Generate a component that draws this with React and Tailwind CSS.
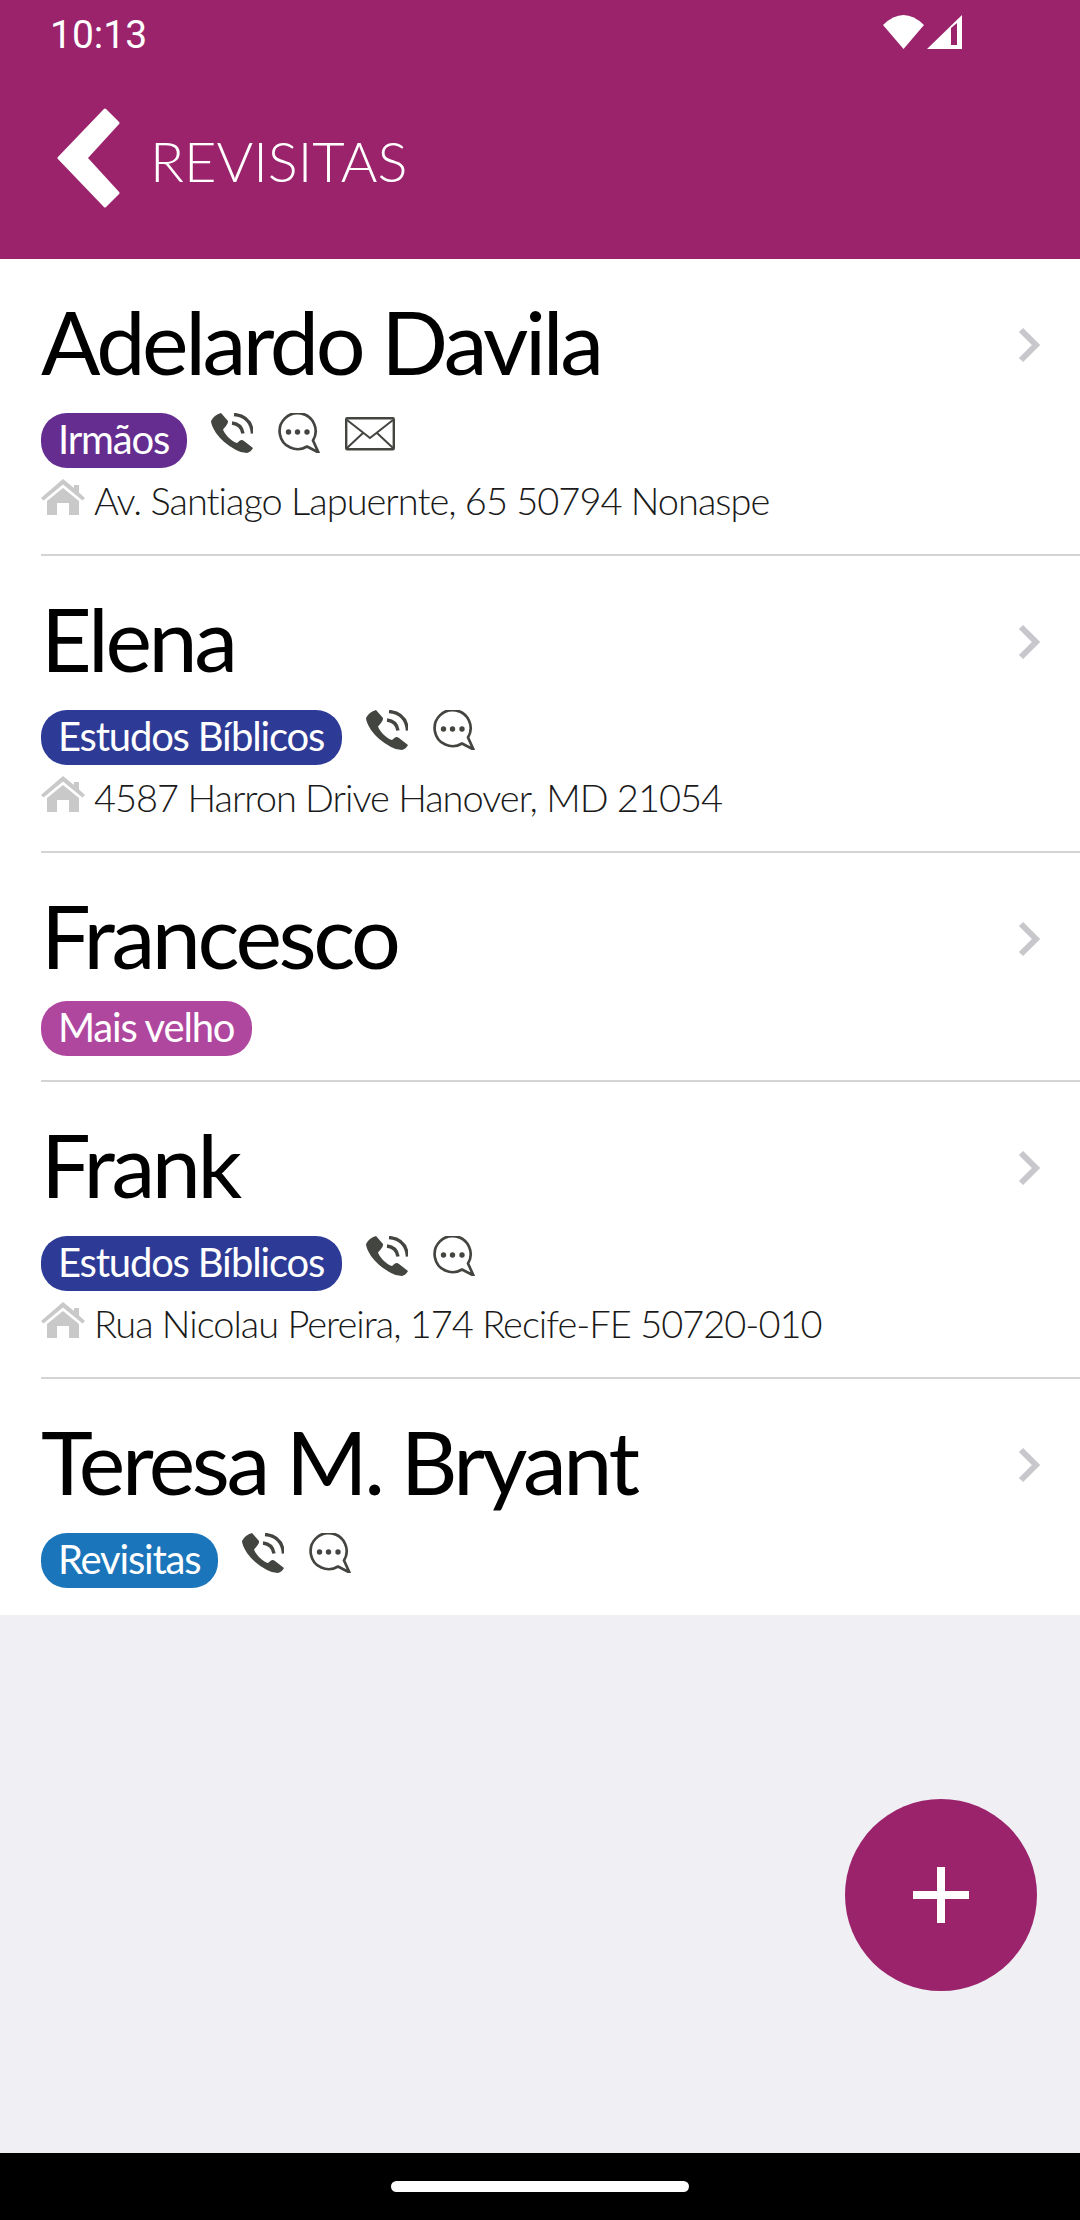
const people = [
    { name: "Adelardo Davila", tag: "Irmãos", color: "bg-[#652d90]", mail: true, address: "Av. Santiago Lapuernte, 65 50794 Nonaspe" },
    { name: "Elena", tag: "Estudos Bíblicos", color: "bg-[#2e3b96]", address: "4587 Harron Drive Hanover, MD 21054" },
    { name: "Francesco", tag: "Mais velho", color: "bg-[#b0479f]", noContact: true },
    { name: "Frank", tag: "Estudos Bíblicos", color: "bg-[#2e3b96]", address: "Rua Nicolau Pereira, 174 Recife-FE 50720-010" },
    { name: "Teresa M. Bryant", tag: "Revisitas", color: "bg-[#1a75bb]", last: true },
];

function PhoneIcon() {
    return (
        <svg width="42" height="40" viewBox="0 0 42 40" fill="none" className="text-[#434541]">
            <path d="M10 0 L17 8 Q17.500 10 15 13 L12 16.500 Q13 20 18 25 Q23 29.500 26 30 L29 27.500 Q31 26.500 33 28 L42 35 Q40 39 36 40 Q30 40 25 37 Q12 30 5 20 Q0 12 0 8 Q3 2 10 0 Z" fill="currentColor" />
            <path d="M21 10 Q30.500 11 32 20.500 M23 1.500 Q40 3 41.500 20.500" stroke="currentColor" strokeWidth="3.400" />
        </svg>
    );
}

function ChatIcon() {
    return (
        <svg width="42" height="40" viewBox="0 0 42 40" fill="none" className="text-[#434541]">
            <path d="M29 33.500 A18 18 0 1 1 35 27.500 L40.500 39.500 Z" stroke="currentColor" strokeWidth="2.700" strokeLinejoin="round" />
            <circle cx="10.500" cy="19" r="2.700" fill="currentColor" />
            <circle cx="19.500" cy="19" r="2.700" fill="currentColor" />
            <circle cx="29" cy="19" r="2.700" fill="currentColor" />
        </svg>
    );
}

function MailIcon() {
    return (
        <svg width="50" height="34" viewBox="0 0 50 34" fill="none" className="mt-[4px] text-[#434541]">
            <rect x="1.200" y="1.200" width="47.600" height="31" rx="1" stroke="currentColor" strokeWidth="2.400" />
            <path d="M2 3 L25 21 L48 3 M2 31 L18 16 M48 31 L32 16" stroke="currentColor" strokeWidth="2" />
        </svg>
    );
}

function HomeIcon() {
    return (
        <svg width="44" height="37" viewBox="0 0 44 37" fill="#c9c9c9" className="shrink-0 mt-[1px]">
            <path d="M22 0 L33 9 V6 H38 V13.500 L44 19 L41.500 21.500 L22 5.500 L2.500 21.500 L0 19 Z" />
            <path d="M22 9 L38 22 V36 H28 V24 H16 V36 H6 V22 Z" />
        </svg>
    );
}

function Row({ person }) {
    return (
        <div className="pl-[41px]">
            <div className={`relative ${person.last ? "h-[236px]" : "border-b-2 border-[#d4d4d6]"} ${person.noContact ? "h-[229px]" : ""} ${!person.last && !person.noContact ? "h-[297px]" : ""}`}>
                <div className="pt-[38px] text-[88px] leading-none tracking-[-3.400px] text-black">
                    {person.name}
                </div>
                <div className={`flex items-start ${person.noContact ? "mt-[22px]" : "mt-[28px]"}`}>
                    <span className={`${person.color} h-[55px] rounded-[26px] pl-[17px] pr-[18px] pb-[4px] flex items-center text-[40px] tracking-[-1.200px] text-white`}>
                        {person.tag}
                    </span>
                    {!person.noContact && (
                        <div className="flex items-start ml-[24px] gap-[25px]">
                            <PhoneIcon />
                            <ChatIcon />
                            {person.mail && <MailIcon />}
                        </div>
                    )}
                </div>
                {person.address && (
                    <div className="flex items-start mt-[10px] gap-[9px]">
                        <HomeIcon />
                        <span className="text-[38px] font-light leading-[44px] tracking-[-1px] text-[#1a1a1a] whitespace-nowrap">{person.address}</span>
                    </div>
                )}
                {/* chevron on the right */}
                <svg width="26" height="36" viewBox="0 0 26 36" fill="none" className="absolute right-[38px] top-[68px]">
                    <path d="M5 3 L20 18 L5 33" stroke="#c8c8cc" strokeWidth="6" />
                </svg>
            </div>
        </div>
    );
}

export default function App() {
    return (
        <div className="relative w-[1080px] h-[2220px] flex flex-col bg-[#efeff4] overflow-hidden font-['Lato',sans-serif]">
            <div className="h-[259px] shrink-0 bg-[#9b236c] text-white">
                <div className="flex items-center justify-between h-[66px] pl-[50px] pr-[118px]">
                    <span className="font-['Roboto',sans-serif] text-[39px] mt-[4px]">10:13</span>
                    <div className="flex items-center gap-[3px] mb-[2px]">
                        <svg width="41" height="34" viewBox="0 0 41 34" fill="white">
                            <path d="M0 10 Q20.500 -10 41 10 L20.500 34 Z" />
                        </svg>
                        <svg width="35" height="34" viewBox="0 0 35 34" fill="white">
                            <path fillRule="evenodd" d="M35 0 V34 H0 Z M30 8 L24 13 V30 H30 Z" />
                        </svg>
                    </div>
                </div>
                <div className="flex items-center mt-[42px] pl-[57px]">
                    <svg width="64" height="100" viewBox="0 0 64 100" fill="white" stroke="white" strokeWidth="3" strokeLinejoin="round">
                        <path d="M48 2 L61 15 L29 50 L61 85 L48 98 L2 50 Z" />
                    </svg>
                    <span className="ml-[29px] mt-[6px] text-[56px] font-light leading-none">REVISITAS</span>
                </div>
            </div>

            <div className="bg-white shrink-0">
                {people.map((p) => (
                    <Row key={p.name} person={p} />
                ))}
            </div>

            <div className="flex-1" />

            <div className="h-[67px] shrink-0 bg-black flex items-center justify-center">
                <div className="w-[298px] h-[11px] rounded-full bg-white" />
            </div>

            <button className="absolute left-[845px] top-[1799px] w-[192px] h-[192px] rounded-full bg-[#9b236c] flex items-center justify-center">
                <svg width="56" height="56" viewBox="0 0 56 56" fill="white">
                    <path d="M24 0 H32 V24 H56 V32 H32 V56 H24 V32 H0 V24 H24 Z" />
                </svg>
            </button>
        </div>
    );
}
